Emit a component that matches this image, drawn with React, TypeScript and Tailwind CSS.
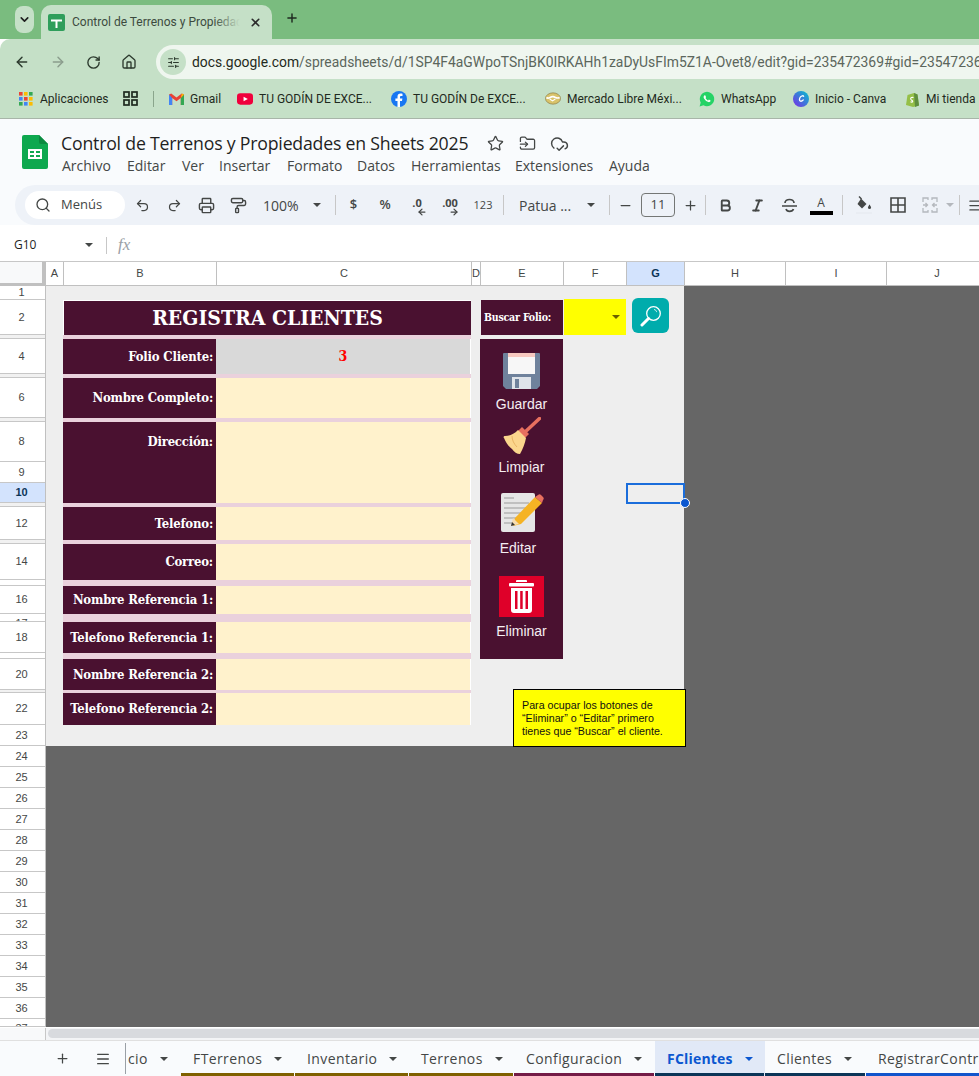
import React from 'react';
import { ArrowLeft, ArrowRight, RotateCw, Home, X, Plus, ChevronDown, Search, Undo2, Redo2, Printer, PaintRoller, Minus, Bold, Italic, Star, FolderInput, CloudCheck, Menu, AlignJustify, SlidersHorizontal } from 'lucide-react';

const ui = "font-['Open_Sans',sans-serif]";
const chrome = "font-['Roboto',sans-serif]";
const slab = "font-['DejaVu_Serif_Condensed','DejaVu_Serif',serif] font-bold";

const colHeaders = [
  ['A', 'w-[18px]'],
  ['B', 'w-[153px]'],
  ['C', 'w-[255px]'],
  ['D', 'w-[9px]'],
  ['E', 'w-[83px]'],
  ['F', 'w-[63px]'],
  ['G', 'w-[58px]'],
  ['H', 'w-[101px]'],
  ['I', 'w-[101px]'],
  ['J', 'w-[101px]'],
];

const rowHeaders = [
  ['1', 'h-[14px]'], ['2', 'h-[35px]'], ['', 'h-[4px]'], ['4', 'h-[35px]'], ['', 'h-[4px]'],
  ['6', 'h-[40px]'], ['', 'h-[4px]'], ['8', 'h-[40px]'], ['9', 'h-[21px]'], ['10', 'h-[20px]'],
  ['', 'h-[4px]'], ['12', 'h-[33px]'], ['', 'h-[4px]'], ['14', 'h-[36px]'], ['15', 'h-[6px]'],
  ['16', 'h-[28px]'], ['17', 'h-[8px]'], ['18', 'h-[31px]'], ['19', 'h-[6px]'], ['20', 'h-[31px]'],
  ['', 'h-[3px]'], ['22', 'h-[32px]'], ['23', 'h-[21px]'], ['24', 'h-[21px]'], ['25', 'h-[21px]'],
  ['26', 'h-[21px]'], ['27', 'h-[21px]'], ['28', 'h-[21px]'], ['29', 'h-[21px]'], ['30', 'h-[21px]'],
  ['31', 'h-[21px]'], ['32', 'h-[21px]'], ['33', 'h-[21px]'], ['34', 'h-[21px]'], ['35', 'h-[21px]'],
  ['36', 'h-[21px]'], ['37', 'h-[8px]'],
];

const formRows = [
  { label: 'Folio Cliente:', row: 'h-[35px] mb-[4px]', value: 'bg-[#d9d9d9]', text: '3' },
  { label: 'Nombre Completo:', row: 'h-[40px] mb-[4px]', value: 'bg-[#fff2cc]' },
  { label: 'Dirección:', row: 'h-[81px] mb-[4px]', value: 'bg-[#fff2cc]', top: true },
  { label: 'Telefono:', row: 'h-[33px] mb-[4px]', value: 'bg-[#fff2cc]' },
  { label: 'Correo:', row: 'h-[36px] mb-[6px]', value: 'bg-[#fff2cc]' },
  { label: 'Nombre Referencia 1:', row: 'h-[28px] mb-[8px]', value: 'bg-[#fff2cc]' },
  { label: 'Telefono Referencia 1:', row: 'h-[31px] mb-[6px]', value: 'bg-[#fff2cc]' },
  { label: 'Nombre Referencia 2:', row: 'h-[31px] mb-[3px]', value: 'bg-[#fff2cc]' },
  { label: 'Telefono Referencia 2:', row: 'h-[32px]', value: 'bg-[#fff2cc]' },
];

const sheetTabs = [
  { name: 'FTerrenos', box: 'w-[114px]', bar: 'bg-[#7f6000]' },
  { name: 'Inventario', box: 'w-[114px]', bar: 'bg-[#7f6000]' },
  { name: 'Terrenos', box: 'w-[105px]', bar: 'bg-[#7f6000]' },
  { name: 'Configuracion', box: 'w-[141px]', bar: 'bg-[#741b47]' },
  { name: 'FClientes', box: 'w-[110px]', bar: 'bg-[#0b3558]', active: true },
  { name: 'Clientes', box: 'w-[101px]', bar: 'bg-[#0b3558]' },
  { name: 'RegistrarContratos', box: 'w-[160px]', bar: 'bg-[#1155cc]' },
];

const menus = [
  ['Archivo', 'w-[65px]'], ['Editar', 'w-[55px]'], ['Ver', 'w-[37px]'], ['Insertar', 'w-[68px]'], ['Formato', 'w-[70px]'],
  ['Datos', 'w-[54px]'], ['Herramientas', 'w-[104px]'], ['Extensiones', 'w-[94px]'], ['Ayuda', 'w-[60px]'],
];

const Caret = ({ className = 'border-t-[#444746]' }: { className?: string }) => (
  <span className={`inline-block h-0 w-0 border-x-[4px] border-t-[4px] border-x-transparent ${className}`} />
);

const Divider = ({ className = '' }: { className?: string }) => <div className={`h-5 w-px bg-[#c7c7c7] ${className}`} />;

const IconBox = ({ children }: { children: React.ReactNode }) => (
  <div className="flex h-7 w-8 shrink-0 items-center justify-center text-[#444746]">{children}</div>
);

function SheetsFavicon() {
  return (
    <svg width="17" height="17" viewBox="0 0 17 17">
      <rect width="17" height="17" rx="2" fill="#2f9e5b" />
      <path d="M3 5.5h11v2H9.500V14h-2V7.500H3z" fill="#fff" />
    </svg>
  );
}

function SheetsLogo() {
  return (
    <svg width="26" height="34" viewBox="0 0 26 34">
      <path d="M2 0h15l9 9v23a2 2 0 0 1-2 2H2a2 2 0 0 1-2-2V2a2 2 0 0 1 2-2z" fill="#0ea84f" />
      <path d="M17 0l9 9h-7a2 2 0 0 1-2-2z" fill="#0b8a40" />
      <path d="M6 14h14v10H6z M8 16v2h4v-2z M14 16v2h4v-2z M8 20v2h4v-2z M14 20v2h4v-2z" fill="#fff" fillRule="evenodd" />
    </svg>
  );
}

function GoogleApps() {
  const dots = ['#ea4335', '#fbbc04', '#34a853', '#4285f4', '#ea4335', '#fbbc04', '#34a853', '#4285f4', '#fbbc04'];
  return (
    <svg width="14" height="14" viewBox="0 0 14 14">
      {dots.map((c, i) => (
        <rect key={i} x={(i % 3) * 5} y={Math.floor(i / 3) * 5} width="3.600" height="3.600" fill={c} />
      ))}
    </svg>
  );
}

function TilesIcon() {
  return (
    <svg width="15" height="15" viewBox="0 0 15 15" className="shrink-0">
      <g fill="none" stroke="#1f2a20" strokeWidth="1.700">
        <rect x="1" y="1" width="5" height="5" />
        <rect x="9" y="1" width="5" height="5" />
        <rect x="1" y="9" width="5" height="5" />
        <rect x="9" y="9" width="5" height="5" />
      </g>
    </svg>
  );
}

function GmailIcon() {
  return (
    <svg width="15" height="12" viewBox="0 0 15 12">
      <path d="M0 1.500V12h3.200V5l4.300 3.200L11.800 5v7H15V1.500L12.800.4 7.500 4.400 2.200.4z" fill="#ea4335" />
      <path d="M0 1.500V12h3.200V5z" fill="#4285f4" />
      <path d="M11.800 5v7H15V1.500z" fill="#34a853" />
      <path d="M12.800.4L15 1.500l-3.200 3.500z" fill="#fbbc04" />
    </svg>
  );
}

function YoutubeIcon() {
  return (
    <svg width="17" height="12" viewBox="0 0 17 12">
      <rect width="17" height="12" rx="3.500" fill="#f0003c" />
      <path d="M7 3.500L11.500 6 7 8.500z" fill="#fff" />
    </svg>
  );
}

function FacebookIcon() {
  return (
    <svg width="16" height="16" viewBox="0 0 16 16">
      <circle cx="8" cy="8" r="8" fill="#1877f2" />
      <path d="M9 16v-6h2l.4-2.400H9V6.200c0-.8.3-1.300 1.300-1.300h1.200V2.800c-.5-.1-1.200-.2-1.900-.2-1.900 0-3.100 1.100-3.100 3.200v1.800H4.400V10h2.100v6z" fill="#fff" />
    </svg>
  );
}

function MercadoIcon() {
  return (
    <svg width="17" height="13" viewBox="0 0 17 13">
      <ellipse cx="8.500" cy="6.500" rx="8" ry="6" fill="#d9c36a" stroke="#8a7a45" strokeWidth="0.700" />
      <path d="M1.500 5.500c3 2 4-1.500 7-1s4 2.500 7 1" fill="none" stroke="#fff" strokeWidth="1.800" />
      <path d="M5 7l3 2 3-2" fill="none" stroke="#fff" strokeWidth="1.200" />
    </svg>
  );
}

function WhatsappIcon() {
  return (
    <svg width="16" height="16" viewBox="0 0 16 16">
      <path d="M.6 15.400l1.100-3.900A7.200 7.200 0 1 1 4.500 14.300z" fill="#25d366" />
      <path d="M5.800 4.300c-.3 0-.7.200-.9.600-.5.900-.3 2 .5 3.200 1 1.500 2.400 2.700 4 3 .9.200 1.800-.2 2.100-1 .1-.3.100-.6 0-.7l-1.600-.8-.7.900c-1-.3-2.200-1.400-2.700-2.500l.6-.8-.7-1.700z" fill="#fff" />
    </svg>
  );
}

function CanvaIcon() {
  return (
    <svg width="16" height="16" viewBox="0 0 16 16">
      <defs>
        <linearGradient id="canva" x1="0" y1="1" x2="1" y2="0">
          <stop offset="0" stopColor="#7d2ae8" />
          <stop offset="1" stopColor="#00c4cc" />
        </linearGradient>
      </defs>
      <circle cx="8" cy="8" r="8" fill="url(#canva)" />
      <path d="M10.600 5.400c-.3-1-2-.8-3.100.5-1.300 1.500-1.500 3.900 0 4.300 1 .2 2-.4 2.800-1.300" fill="none" stroke="#fff" strokeWidth="1.300" strokeLinecap="round" />
    </svg>
  );
}

function ShopifyIcon() {
  return (
    <svg width="14" height="16" viewBox="0 0 14 16">
      <path d="M1 14L2.500 4 9 2l3.500 1.500L14 14.500 8 16z" fill="#95bf47" />
      <path d="M9 2l3.500 1.500L14 14.500 10 16z" fill="#5e8e3e" />
      <path d="M8.500 6.500C7 6 5.500 6.700 5.700 8c.2 1.200 2 1.300 2 2.400 0 .8-1.100 1-2.200.4" fill="none" stroke="#fff" strokeWidth="1.100" />
    </svg>
  );
}

function Floppy() {
  return (
    <svg width="37" height="36" viewBox="0 0 37 36">
      <path d="M1 0h35a1 1 0 0 1 1 1v32l-3 3H3l-3-3V1a1 1 0 0 1 1-1z" fill="#6f829c" />
      <rect x="5" y="0" width="27" height="21" fill="#f7f7f7" />
      <rect x="5" y="0" width="27" height="4" fill="#f7c9c0" />
      <rect x="9" y="24" width="19" height="12" fill="#dfe4ea" />
      <rect x="12" y="26" width="4" height="9" fill="#6f829c" />
    </svg>
  );
}

function Broom() {
  return (
    <svg width="38" height="38" viewBox="0 0 38 38">
      <path d="M36.500 1.500L21 16" stroke="#e8705f" strokeWidth="3.500" strokeLinecap="round" />
      <path d="M15 14l4-4 7 7-4 4z" fill="#e8705f" />
      <path d="M15 13l8 8c-1 5-3 11-6 16-3 0-6-2-8-5-3-2-6-6-8-11-1-1 0-2 1-2 5 0 9-2 13-6z" fill="#fbd68d" />
      <path d="M9 19c0 4 2 8 5 11" fill="none" stroke="#e9b565" strokeWidth="1" />
    </svg>
  );
}

function NotePencil() {
  return (
    <svg width="43" height="40" viewBox="0 0 43 40">
      <rect x="0" y="0" width="34" height="39" rx="2" fill="#e6e6e6" />
      <g stroke="#9a9a9a" strokeWidth="1">
        <path d="M3 5h10M3 10h25M3 15h25M3 20h22M3 25h14M3 30h10" />
      </g>
      <path d="M34 4l7 6-21 21-8 2 2-8z" fill="#f5b324" />
      <path d="M34 4l3-2c1-1 2-1 3 0l2 2c1 1 1 2 0 3l-1 3z" fill="#e8705f" />
      <path d="M12 25l-2 8 8-2z" fill="#f6dcb0" />
      <path d="M11 29l-1 4 4-1z" fill="#333" />
    </svg>
  );
}

function TrashTile() {
  return (
    <svg width="45" height="41" viewBox="0 0 45 41">
      <rect width="45" height="41" fill="#df0029" />
      <path d="M17 5a1 1 0 0 1 1-1h9a1 1 0 0 1 1 1v1H17z" fill="#fff" />
      <rect x="10" y="7" width="25" height="3.500" rx="1" fill="#fff" />
      <path d="M12 12h21v22a3 3 0 0 1-3 3H15a3 3 0 0 1-3-3z M16 15v18h2.500V15z M21.200 15v18h2.500V15z M26.500 15v18H29V15z" fill="#fff" fillRule="evenodd" />
    </svg>
  );
}

function Magnifier() {
  return (
    <svg width="22" height="22" viewBox="0 0 22 22">
      <circle cx="13.500" cy="8.500" r="6.800" fill="none" stroke="#fff" strokeWidth="1.300" />
      <path d="M8.500 13.500L2 20" stroke="#fff" strokeWidth="3" strokeLinecap="round" />
      <path d="M14 4.500c1.500.2 2.500 1.200 2.600 2.600" fill="none" stroke="#fff" strokeWidth="0.800" />
    </svg>
  );
}

function StrikeIcon() {
  return (
    <svg width="17" height="15" viewBox="0 0 17 15">
      <path d="M4 5c0-2 2-3.500 4.500-3.500S13 3 13 5 M1 8h15 M5 11c.5 1.500 2 2.300 3.500 2.300S12 12.500 12.500 11" fill="none" stroke="#444746" strokeWidth="1.700" />
    </svg>
  );
}

function FillIcon() {
  return (
    <svg width="18" height="18" viewBox="0 0 18 18">
      <path d="M4 .5l2.500 2.500" stroke="#444746" strokeWidth="1.400" />
      <path d="M6 2.500l5.500 5.500-4.500 4.500-4.500-4.500z" fill="#444746" />
      <path d="M14.500 8.500s1.500 2 1.500 3a1.500 1.500 0 0 1-3 0c0-1 1.500-3 1.500-3z" fill="#444746" />
      <rect x="1" y="16" width="16" height="2" fill="#e9edf3" />
    </svg>
  );
}

function BordersIcon() {
  return (
    <svg width="16" height="16" viewBox="0 0 16 16">
      <path d="M1 1h14v14H1z M8 1v14 M1 8h14" fill="none" stroke="#444746" strokeWidth="1.600" />
    </svg>
  );
}

function MergeIcon() {
  return (
    <svg width="16" height="16" viewBox="0 0 16 16">
      <path d="M1 5V1h5v2 M15 5V1h-5v2 M1 11v4h5v-2 M15 11v4h-5v-2 M1 8h4 M3.500 6l2 2-2 2 M15 8h-4 M12.500 6l-2 2 2 2" fill="none" stroke="#b4b8bd" strokeWidth="1.300" />
    </svg>
  );
}

function TabBar() {
  return (
    <div className="flex h-[39px] items-end bg-[#7abc7f] pl-[15px]">
      <div className="mb-[6px] flex h-[27px] w-[19px] items-center justify-center rounded-lg bg-[#c5e0c7] text-[#1f1f1f]">
        <ChevronDown size={13} strokeWidth={3} />
      </div>
      <div className={`relative ml-[7px] flex h-[34px] w-[231px] items-center rounded-t-[10px] bg-[#c5e0c7] pl-[7px] pr-[7px] ${chrome}`}>
        <SheetsFavicon />
        <div className="ml-[7px] w-[168px] overflow-hidden whitespace-nowrap text-[12px] text-[#3c4a3e]">Control de Terrenos y Propiedades</div>
        <div className="pointer-events-none absolute left-[173px] top-0 h-full w-[26px] bg-gradient-to-r from-transparent to-[#c5e0c7]" />
        <X size={13} strokeWidth={3} className="ml-[9px] text-[#2b2b2b]" />
      </div>
      <Plus size={14} strokeWidth={2.500} className="mb-[14px] ml-[13px] text-[#1f2a20]" />
    </div>
  );
}

function AddressBar() {
  return (
    <div className="flex h-[40px] items-center rounded-tl-[10px] bg-[#c5e0c7] pl-[14px] pt-[6px] text-[#2c3a2e]">
      <ArrowLeft size={16} strokeWidth={2.200} />
      <ArrowRight size={16} strokeWidth={2.200} className="ml-[20px] text-[#8b9d8d]" />
      <RotateCw size={15} strokeWidth={2.200} className="ml-[20px]" />
      <Home size={16} strokeWidth={2} className="ml-[20px]" />
      <div className="ml-[19px] flex h-[34px] flex-1 items-center overflow-hidden rounded-l-full bg-[#eff6ef] pl-[4px]">
        <div className="flex h-[26px] w-[26px] shrink-0 items-center justify-center rounded-full bg-[#c5e0c7]">
          <SlidersHorizontal size={13} strokeWidth={2} />
        </div>
        <div className={`ml-[6px] whitespace-nowrap text-[13.900px] text-[#5b665c] ${chrome}`}>
          <span className="text-[#1f2a20]">docs.google.com</span>/spreadsheets/d/1SP4F4aGWpoTSnjBK0IRKAHh1zaDyUsFIm5Z1A-Ovet8/edit?gid=235472369#gid=235472369
        </div>
      </div>
    </div>
  );
}

function Bookmark({ icon, label, className }: { icon: React.ReactNode; label: string; className: string }) {
  return (
    <div className={`flex shrink-0 items-center ${className}`}>
      <div className="flex w-[16px] justify-center">{icon}</div>
      <span className="ml-[6px] whitespace-nowrap">{label}</span>
    </div>
  );
}

function Bookmarks() {
  return (
    <div className={`flex h-[40px] items-center overflow-hidden border-b border-[#a8b5a9] bg-[#c5e0c7] pl-[18px] text-[12px] text-[#1f2a20] ${chrome}`}>
      <Bookmark icon={<GoogleApps />} label="Aplicaciones" className="w-[105px]" />
      <TilesIcon />
      <div className="ml-[15px] h-[16px] w-px bg-[#8aa58c]" />
      <Bookmark icon={<GmailIcon />} label="Gmail" className="ml-[14px] w-[69px]" />
      <Bookmark icon={<YoutubeIcon />} label="TU GODÍN DE EXCE..." className="w-[154px]" />
      <Bookmark icon={<FacebookIcon />} label="TU GODÍN De EXCE..." className="w-[154px]" />
      <Bookmark icon={<MercadoIcon />} label="Mercado Libre Méxi..." className="w-[154px]" />
      <Bookmark icon={<WhatsappIcon />} label="WhatsApp" className="w-[94px]" />
      <Bookmark icon={<CanvaIcon />} label="Inicio - Canva" className="w-[111px]" />
      <Bookmark icon={<ShopifyIcon />} label="Mi tienda" className="" />
    </div>
  );
}

function DocHeader() {
  return (
    <div className={`flex h-[66px] bg-[#f9fbfd] pl-[22px] pt-[16px] ${ui}`}>
      <SheetsLogo />
      <div className="ml-[13px] -mt-[4px]">
        <div className="flex h-[24px] items-center text-[17.700px] text-[#1f1f1f]">
          <span className="w-[424px] whitespace-nowrap tracking-[-0.2px]">Control de Terrenos y Propiedades en Sheets 2025</span>
          <Star size={17} strokeWidth={1.800} className="ml-[2px] text-[#444746]" />
          <FolderInput size={17} strokeWidth={1.800} className="ml-[15px] text-[#444746]" />
          <CloudCheck size={19} strokeWidth={1.800} className="ml-[14px] text-[#444746]" />
        </div>
        <div className="ml-px flex text-[14px] text-[#444746]">
          {menus.map(([name, w]) => (
            <span key={name} className={`${w} whitespace-nowrap`}>{name}</span>
          ))}
        </div>
      </div>
    </div>
  );
}

function Toolbar() {
  return (
    <div className={`bg-[#f9fbfd] pl-[15px] ${ui}`}>
      <div className="flex h-[40px] items-center overflow-hidden rounded-l-full bg-[#eef2f8] pl-[10px] text-[#444746]">
        <div className="flex h-[28px] w-[100px] shrink-0 items-center rounded-full bg-white pl-[10px] text-[13px]">
          <Search size={16} strokeWidth={2} />
          <span className="ml-[10px]">Menús</span>
        </div>
        <div className="w-px shrink-0" />
        <IconBox><Undo2 size={15} strokeWidth={2} /></IconBox>
        <IconBox><Redo2 size={15} strokeWidth={2} /></IconBox>
        <IconBox><Printer size={17} strokeWidth={2} /></IconBox>
        <IconBox><PaintRoller size={17} strokeWidth={2} /></IconBox>
        <div className="flex w-[75px] shrink-0 items-center pl-[9px] text-[14px]">
          100%<span className="ml-[14px] flex"><Caret /></span>
        </div>
        <Divider className="ml-[6px] shrink-0" />
        <div className="flex w-[35px] shrink-0 justify-center text-[13px] font-semibold">$</div>
        <div className="flex w-[28px] shrink-0 justify-center text-[13px] font-semibold">%</div>
        <div className="relative flex h-[24px] w-[36px] shrink-0 justify-center pt-[4px] text-[11px] font-bold leading-none">
          <span>.0</span>
          <ArrowLeft size={10} strokeWidth={3} className="absolute left-[18px] top-[14px]" />
        </div>
        <div className="relative flex h-[24px] w-[30px] shrink-0 justify-center pt-[4px] text-[11px] font-bold leading-none">
          <span>.00</span>
          <ArrowRight size={10} strokeWidth={3} className="absolute left-[14px] top-[14px]" />
        </div>
        <div className="flex w-[36px] shrink-0 justify-center text-[11px]">123</div>
        <Divider className="ml-[2px] shrink-0" />
        <div className="flex w-[105px] shrink-0 items-center pl-[15px] text-[14px]">
          <span className="w-[68px] whitespace-nowrap">Patua ...</span><Caret />
        </div>
        <Divider className="shrink-0" />
        <div className="flex w-[31px] shrink-0 justify-center"><Minus size={15} strokeWidth={2} /></div>
        <div className="flex h-[24px] w-[34px] shrink-0 items-center justify-center rounded border border-[#747775] text-[13px]">11</div>
        <div className="flex w-[30px] shrink-0 justify-center"><Plus size={15} strokeWidth={2} /></div>
        <Divider className="shrink-0" />
        <div className="ml-[3px] flex shrink-0">
          <IconBox><Bold size={15} strokeWidth={3} /></IconBox>
          <IconBox><Italic size={15} strokeWidth={3} /></IconBox>
          <IconBox><StrikeIcon /></IconBox>
          <IconBox>
            <div className="flex flex-col items-center text-[12px] leading-[13px]">
              A
              <div className="mt-[2px] h-[4px] w-[23px] bg-black" />
            </div>
          </IconBox>
        </div>
        <Divider className="ml-[5px] shrink-0" />
        <div className="ml-[5px] flex shrink-0">
          <IconBox><FillIcon /></IconBox>
          <div className="ml-[2px]"><IconBox><BordersIcon /></IconBox></div>
          <IconBox><MergeIcon /></IconBox>
        </div>
        <span className="flex shrink-0"><Caret className="border-t-[#b4b8bd]" /></span>
        <Divider className="ml-[5px] shrink-0" />
        <AlignJustify size={15} strokeWidth={2} className="ml-[8px] shrink-0" />
      </div>
    </div>
  );
}

function FormulaBar() {
  return (
    <div className={`flex h-[37px] items-center border-b border-[#c7c7c7] bg-white pl-[14px] pt-[4px] ${ui}`}>
      <span className="w-[71px] text-[12px] text-[#1f1f1f]">G10</span>
      <Caret />
      <div className="ml-[13px] h-[17px] w-px bg-[#c7c7c7]" />
      <span className="ml-[11px] font-['Liberation_Serif',serif] text-[17px] italic text-[#9aa0a6]">fx</span>
    </div>
  );
}

function ColumnHeader() {
  return (
    <div className="flex h-[24px] font-['Liberation_Sans',sans-serif] text-[11px] text-[#444746]">
      <div className="w-[46px] shrink-0 border-b-[3px] border-r-[4px] border-[#c0c0c0] bg-[#f8f9fa]" />
      {colHeaders.map(([c, w]) => (
        <div
          key={c}
          className={`${w} flex shrink-0 items-center justify-center border-b border-r border-[#c0c0c0] ${c === 'G' ? 'bg-[#d3e3fd] font-bold text-[#0b3558]' : 'bg-white'}`}
        >
          {c}
        </div>
      ))}
    </div>
  );
}

function RowHeader() {
  return (
    <div className="w-[46px] shrink-0 overflow-hidden border-r border-[#c0c0c0] bg-white font-['Liberation_Sans',sans-serif] text-[11px] text-[#444746]">
      {rowHeaders.map(([r, h], i) => {
        const clipped = h === 'h-[6px]' || h === 'h-[8px]';
        return (
          <div
            key={i}
            className={`${h} flex justify-center overflow-hidden border-b border-[#c7c7c7] pr-[2px] ${clipped ? 'items-start pt-[1px]' : 'items-center'} ${r === '10' ? 'bg-[#d3e3fd] font-bold text-[#0b3558]' : ''} ${r === '' ? 'bg-[#f1f1f1]' : ''}`}
          >
            {r}
          </div>
        );
      })}
    </div>
  );
}

function ActionPanel() {
  return (
    <div className="mt-[4px] flex h-[320px] w-[83px] flex-col items-center bg-[#4a1130] pt-[14px] font-['Liberation_Sans',sans-serif] text-[14px] leading-[16px] text-[#f5eef2]">
      <Floppy />
      <span className="mt-[7px]">Guardar</span>
      <div className="mt-[5px]"><Broom /></div>
      <span className="mt-[4px]">Limpiar</span>
      <div className="ml-[2px] mt-[18px]"><NotePencil /></div>
      <span className="mt-[7px] -ml-[7px]">Editar</span>
      <div className="mt-[20px]"><TrashTile /></div>
      <span className="mt-[6px]">Eliminar</span>
    </div>
  );
}

function SheetBody() {
  return (
    <div className="relative flex-1 overflow-hidden bg-[#666666]">
      <div className="flex h-[460px] w-[638px] bg-[#eeeeee] pl-[17px] pt-[14px]">
        <div className="w-[408px] shrink-0 self-start bg-[#ead1dc]">
          <div className={`mb-[4px] flex h-[35px] items-center justify-center border-l border-t border-white bg-[#4a1130] text-[21px] text-white ${slab}`}>
            REGISTRA CLIENTES
          </div>
          {formRows.map(f => (
            <div key={f.label} className={`flex ${f.row}`}>
              <div className={`flex w-[153px] justify-end whitespace-nowrap bg-[#4a1130] pr-[3px] text-[13px] tracking-[-0.2px] text-white ${slab} ${f.top ? 'items-start pt-[10px]' : 'items-center'}`}>
                {f.label}
              </div>
              <div className={`flex flex-1 items-center justify-center border-r border-white ${f.value} ${slab} text-[14px] text-[#ff0000]`}>
                {f.text}
              </div>
            </div>
          ))}
        </div>
        <div className="ml-[9px] w-[83px] shrink-0">
          <div className={`ml-px flex h-[35px] w-[82px] items-center bg-[#4a1130] pl-[3px] text-[10.500px] tracking-[-0.2px] text-white ${slab}`}>
            Buscar Folio:
          </div>
          <ActionPanel />
        </div>
        <div className="ml-px -mt-px flex h-[36px] w-[62px] shrink-0 items-center justify-end bg-[#ffff00] pr-[6px]">
          <Caret className="border-t-[#6b5e00]" />
        </div>
        <div className="-mt-[2px] ml-[6px] flex h-[35px] w-[37px] shrink-0 items-center justify-center rounded-md bg-[#00acac]">
          <Magnifier />
        </div>
      </div>
      <div className="absolute left-[580px] top-[197px] h-[21px] w-[59px] border-2 border-[#1a6ddb]" />
      <div className="absolute left-[634px] top-[212px] h-[10px] w-[10px] rounded-full border border-white bg-[#0b57d0]" />
      <div className="absolute left-[467px] top-[403px] h-[58px] w-[173px] border border-black bg-[#ffff00] pl-[8px] pt-[9px] font-['Liberation_Sans',sans-serif] text-[10.700px] leading-[13px] text-[#111]">
        Para ocupar los botones de<br />“Eliminar” o “Editar” primero<br />tienes que “Buscar” el cliente.
      </div>
    </div>
  );
}

function ScrollRow() {
  return (
    <div className="flex h-[13px] border-t border-white bg-[#f3f4f6]">
      <div className="w-[46px] shrink-0 border-r border-[#c7c7c7] bg-[#f8f9fa]" />
      <div className="ml-[2px] mt-[1px] h-[9px] flex-1 rounded-l-full bg-[#d8dade]" />
    </div>
  );
}

function SheetTabs() {
  return (
    <div className={`flex h-[36px] overflow-hidden border-t border-[#e0e0e0] bg-[#f9fbfd] text-[14px] tracking-[0.4px] text-[#444746] ${ui}`}>
      <div className="flex w-[125px] shrink-0 items-center pl-[55px]">
        <Plus size={15} strokeWidth={2} />
        <Menu size={16} strokeWidth={2} className="ml-[25px]" />
      </div>
      <div className="my-[2px] flex w-[56px] shrink-0 items-center border-l border-[#9aa0a6] pl-[2px]">
        <span>cio</span>
        <span className="ml-[12px] flex"><Caret /></span>
      </div>
      {sheetTabs.map(t => (
        <div key={t.name} className={`${t.box} relative flex shrink-0 items-center overflow-hidden whitespace-nowrap pl-[12px] ${t.active ? 'bg-[#e1e9f7] font-bold tracking-[0.2px] text-[#0b57d0]' : ''}`}>
          {t.name}
          <span className="ml-[12px] flex">
            <Caret className={t.active ? 'border-t-[#0b57d0]' : 'border-t-[#444746]'} />
          </span>
          <div className={`absolute bottom-0 left-0 right-px h-[3px] ${t.bar}`} />
        </div>
      ))}
    </div>
  );
}

export default function App() {
  return (
    <div className="flex h-[1076px] w-[979px] flex-col overflow-hidden bg-white">
      <TabBar />
      <AddressBar />
      <Bookmarks />
      <DocHeader />
      <Toolbar />
      <FormulaBar />
      <ColumnHeader />
      <div className="flex h-[741px]">
        <RowHeader />
        <SheetBody />
      </div>
      <ScrollRow />
      <SheetTabs />
    </div>
  );
}
